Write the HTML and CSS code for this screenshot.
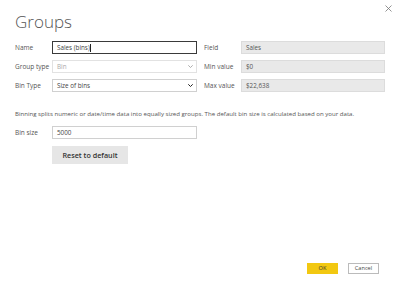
FILE: index.html
```html
<!DOCTYPE html>
<html lang="en">
<head>
    <meta charset="UTF-8">
    <meta name="viewport" content="width=device-width, initial-scale=1.0">
    <title>Groups</title>
    <link rel="stylesheet" href="styles.css">
</head>
<body>
    <div class="dialog">
        <button class="close" aria-label="Close">
            <svg width="7" height="7" viewBox="0 0 7 7"><path d="M0.5 0.5 L6.5 6.5 M6.5 0.5 L0.5 6.5" stroke="#777" stroke-width="0.8" fill="none"/></svg>
        </button>
        <h1>Groups</h1>

        <div class="grid">
            <label>Name</label>
            <div class="field focused">Sales (bins)<span class="caret"></span></div>
            <label class="right">Field</label>
            <div class="field readonly">Sales</div>

            <label>Group type</label>
            <div class="field select disabled">Bin
                <svg class="chevron" width="5" height="3" viewBox="0 0 5 3"><path d="M0.3 0.3 L2.5 2.5 L4.7 0.3" stroke="#999" stroke-width="0.8" fill="none"/></svg>
            </div>
            <label class="right">Min value</label>
            <div class="field readonly">$0</div>

            <label>Bin Type</label>
            <div class="field select">Size of bins
                <svg class="chevron" width="5" height="3" viewBox="0 0 5 3"><path d="M0.3 0.3 L2.5 2.5 L4.7 0.3" stroke="#222" stroke-width="1" fill="none"/></svg>
            </div>
            <label class="right">Max value</label>
            <div class="field readonly">$22,638</div>
        </div>

        <p class="hint">Binning splits numeric or date/time data into equally sized groups. The default bin size is calculated based on your data.</p>

        <div class="row">
            <label>Bin size</label>
            <div class="field">5000</div>
        </div>
        <div class="row">
            <span class="spacer"></span>
            <button class="reset">Reset to default</button>
        </div>

        <div class="footer">
            <button class="ok">OK</button>
            <button class="cancel">Cancel</button>
        </div>
    </div>
</body>
</html>
```

FILE: styles.css
```css
body {
    margin: 0;
    font-family: "Open Sans", "Noto Sans", sans-serif;
    background-color: white;
    color: #444;
}
.dialog {
    position: relative;
    width: 400px;
    height: 290px;
    box-sizing: border-box;
    padding: 11px 15px 0 15px;
}
.close {
    position: absolute;
    top: 5px;
    right: 8px;
    border: none;
    background: none;
    padding: 0;
    line-height: 0;
}
h1 {
    margin: 0 0 9px 0;
    font-size: 17px;
    font-weight: 300;
    line-height: 21px;
    color: #555;
}
.grid {
    display: grid;
    grid-template-columns: 37px 145px 44px 144px;
    row-gap: 6px;
    align-items: center;
}
label {
    font-size: 6.5px;
    color: #555;
}
label.right {
    padding-left: 7px;
}
.field {
    position: relative;
    height: 13px;
    box-sizing: border-box;
    border: 1px solid #d0d0d0;
    padding-left: 4px;
    font-size: 6.3px;
    line-height: 11px;
    color: #444;
    background-color: white;
}
.field.focused {
    border-color: #3a3a3a;
}
.caret {
    display: inline-block;
    width: 1px;
    height: 8px;
    background-color: #222;
    vertical-align: middle;
}
.field.readonly {
    background-color: #e9e9e9;
    border-color: #dcdcdc;
    color: #555;
}
.field.disabled {
    color: #aaa;
    border-color: #e2e2e2;
}
.chevron {
    position: absolute;
    right: 3px;
    top: 4px;
}
.hint {
    margin: 17px 0 8px 0;
    font-size: 6.1px;
    color: #555;
}
.row {
    display: grid;
    grid-template-columns: 37px 145px;
    align-items: center;
    margin-bottom: 7px;
}
.reset {
    width: 76px;
    height: 18px;
    border: none;
    background-color: #e6e6e6;
    font-family: inherit;
    font-size: 7.2px;
    font-weight: 600;
    color: #333;
    padding: 0;
}
.footer {
    position: absolute;
    right: 21px;
    top: 263px;
    display: flex;
    gap: 10px;
}
.footer button {
    width: 31px;
    height: 11px;
    padding: 0;
    font-family: inherit;
    font-size: 5.6px;
    line-height: 9px;
}
.ok {
    background-color: #f2c811;
    border: 1px solid #f2c811;
    color: #333;
}
.cancel {
    width: 32px;
    background-color: white;
    border: 1px solid #bbb;
    color: #444;
}
```
